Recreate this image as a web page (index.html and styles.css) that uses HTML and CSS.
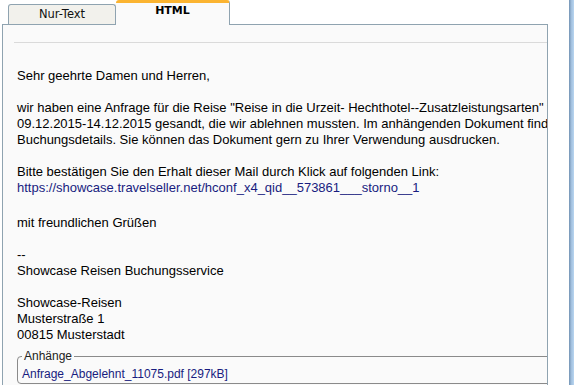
FILE: index.html
```html
<!DOCTYPE html>
<html lang="de">
<head>
    <meta charset="UTF-8">
    <meta name="viewport" content="width=device-width, initial-scale=1.0">
    <title>Nachricht</title>
    <link rel="stylesheet" href="styles.css">
</head>
<body>
    <div class="window">
        <div class="mailview">
            <div class="tabs">
                <div class="tab">Nur-Text</div>
                <div class="tab active">HTML</div>
            </div>
            <div class="panel">
                <div class="panel-head"></div>
                <div class="mail">
                    <div class="mail-text">
                        Sehr geehrte Damen und Herren,<br>
                        <br>
                        wir haben eine Anfrage für die Reise "Reise in die Urzeit- Hechthotel--Zusatzleistungsarten" vom<br>
                        09.12.2015-14.12.2015 gesandt, die wir ablehnen mussten. Im anhängenden Dokument finden Sie alle<br>
                        Buchungsdetails. Sie können das Dokument gern zu Ihrer Verwendung ausdrucken.<br>
                        <br>
                        Bitte bestätigen Sie den Erhalt dieser Mail durch Klick auf folgenden Link:<br>
                        <a href="#">https://showcase.travelseller.net/hconf_x4_qid__573861___storno__1</a>
                    </div>
                    <div class="mail-signature">
                        mit freundlichen Grüßen<br>
                        <br>
                        --<br>
                        Showcase Reisen Buchungsservice<br>
                        <br>
                        Showcase-Reisen<br>
                        Musterstraße 1<br>
                        00815 Musterstadt
                    </div>
                </div>
                <fieldset class="attachments">
                    <legend>Anhänge</legend>
                    <a href="#">Anfrage_Abgelehnt_11075.pdf [297kB]</a>
                </fieldset>
            </div>
        </div>
        <div class="gap"></div>
        <div class="frame-edge"></div>
    </div>
</body>
</html>
```

FILE: styles.css
```css
body {
    margin: 0;
    background-color: #fff;
    font-family: "Liberation Sans", Arial, sans-serif;
    color: #000;
    overflow: hidden;
}

.window {
    display: flex;
    height: 385px;
}

.mailview {
    width: 546px;
    padding-left: 2px;
    display: flex;
    flex-direction: column;
}

.gap {
    flex: 1;
}

.frame-edge {
    width: 5px;
    background: linear-gradient(to right, #7393b4, #a3c1df 50%, #b9d6f1);
}

/* tabs */
.tabs {
    display: flex;
    align-items: flex-end;
    height: 24px;
    padding-left: 6px;
}

.tab {
    box-sizing: border-box;
    width: 108px;
    height: 20px;
    border: 1px solid #8fa3b0;
    border-bottom: none;
    border-radius: 3px 3px 0 0;
    background-color: #f2f1ec;
    font-family: "DejaVu Sans", Verdana, sans-serif;
    font-size: 11.5px;
    line-height: 19px;
    text-align: center;
    color: #111;
}

.tab.active {
    position: relative;
    width: 114px;
    height: 25px;
    margin-bottom: -1px;
    border-left: none;
    border-top: 3px solid #fbb431;
    background-color: #fafafa;
    font-size: 11px;
    font-weight: bold;
    line-height: 16px;
    color: #000;
}

/* message body */
.panel {
    flex: 1;
    border: 1px solid #8fa3b0;
    border-bottom: none;
    background-color: #fafafa;
    overflow: hidden;
}

.panel-head {
    height: 17px;
    margin-left: 11px;
    border-bottom: 1px solid #dadada;
}

.mail {
    padding: 25px 0 0 14px;
    font-size: 13px;
    line-height: 16px;
    white-space: nowrap;
}

.mail-signature {
    margin-top: 19px;
}

.mail a,
.attachments a {
    color: #181c80;
    text-decoration: none;
}

.attachments {
    width: 600px;
    margin: 6px 0 0 14px;
    padding: 4px 4px 1px 4px;
    border: 1px solid #8a8a8a;
    border-radius: 4px;
    font-size: 12px;
    line-height: 15px;
    white-space: nowrap;
}

.attachments legend {
    padding: 0 2px;
    font-size: 12px;
    line-height: 14px;
    color: #222;
}
```
